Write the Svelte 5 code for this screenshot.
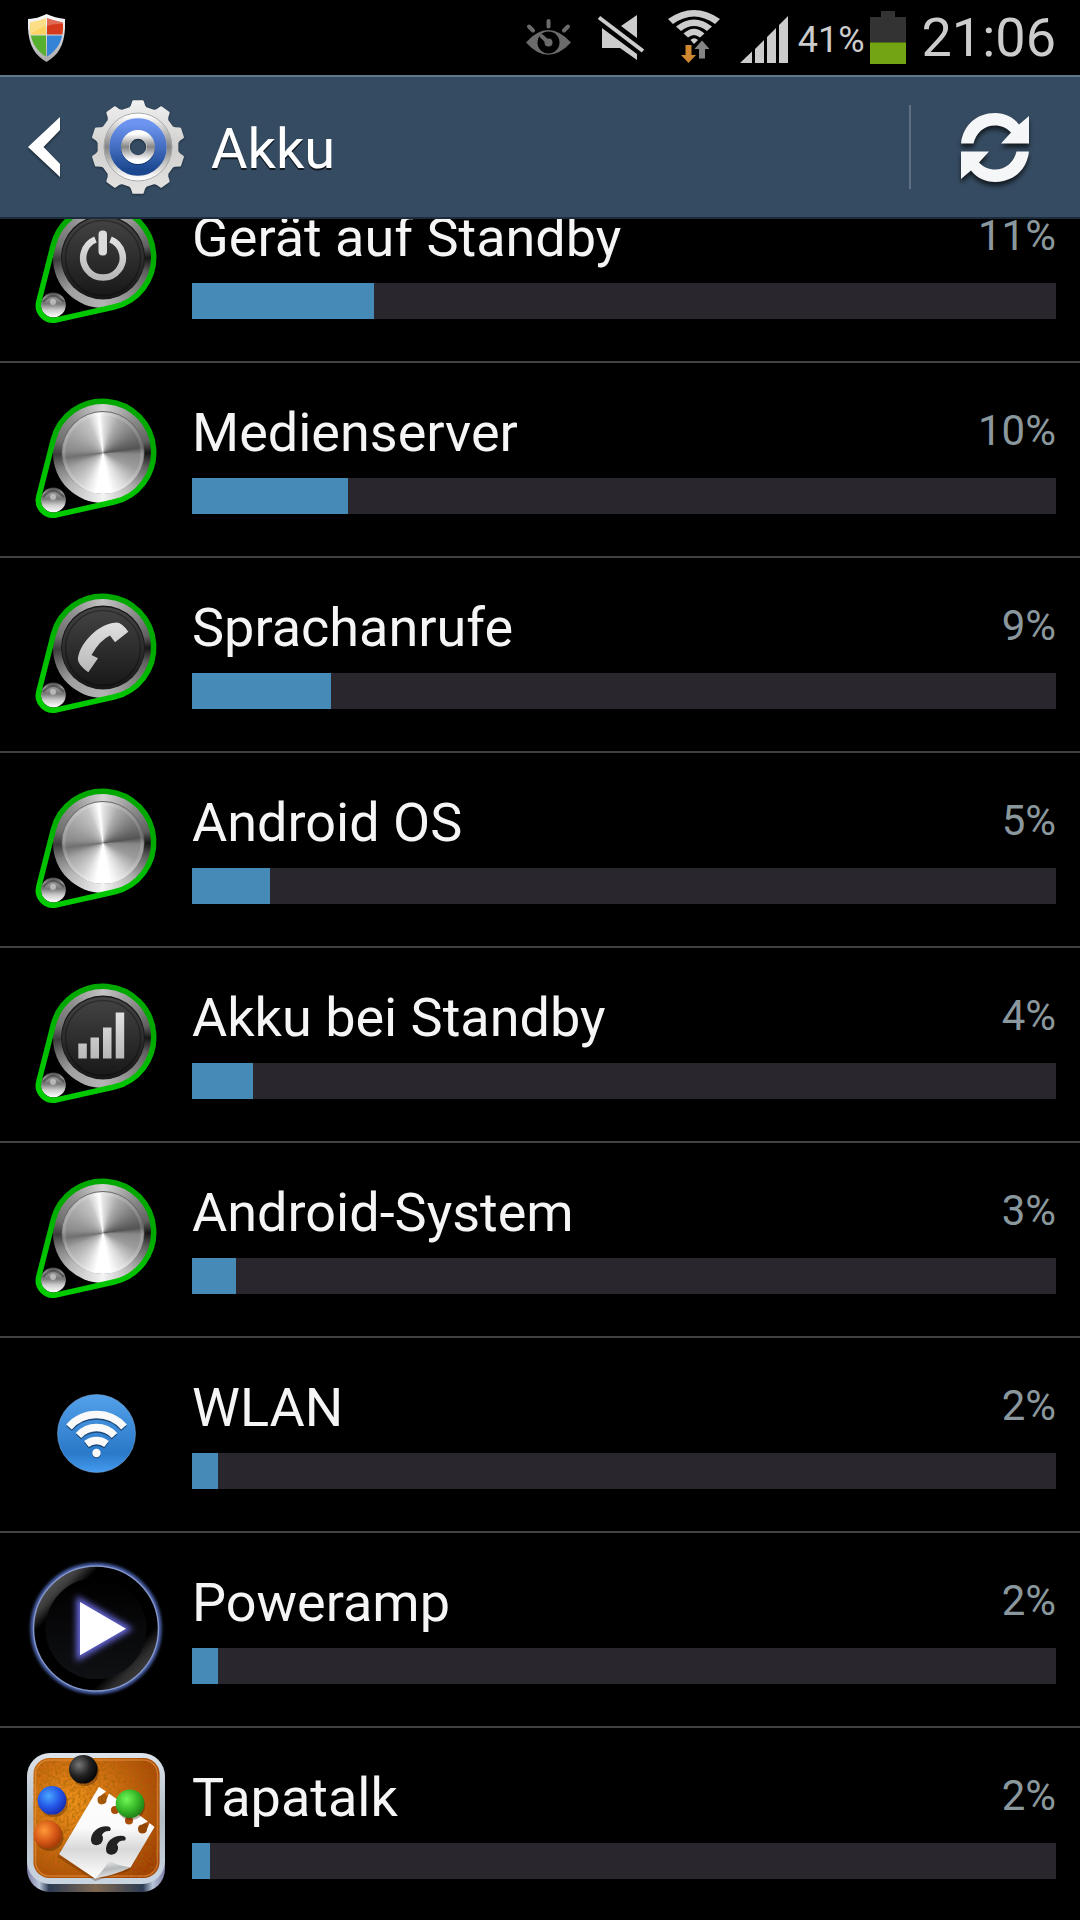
<script>
  const apps = [
    { name: 'Gerät auf Standby', percent: 11, bar: 21.1, icon: 'power' },
    { name: 'Medienserver', percent: 10, bar: 18.1, icon: 'metal' },
    { name: 'Sprachanrufe', percent: 9, bar: 16.1, icon: 'phone' },
    { name: 'Android OS', percent: 5, bar: 9, icon: 'metal' },
    { name: 'Akku bei Standby', percent: 4, bar: 7.1, icon: 'signal' },
    { name: 'Android-System', percent: 3, bar: 5.1, icon: 'metal' },
    { name: 'WLAN', percent: 2, bar: 3, icon: 'wifi' },
    { name: 'Poweramp', percent: 2, bar: 3, icon: 'poweramp' },
    { name: 'Tapatalk', percent: 2, bar: 2.1, icon: 'tapatalk' },
  ];

  // Outline of the ten-toothed settings gear, centred on 47,47.
  const gearPoints = Array.from({ length: 10 }, (_, i) => {
    const a = (i * Math.PI) / 5;
    const tooth = [[-8, -38.5], [-6, -41], [-4.5, -45.5], [4.5, -45.5], [6, -41], [8, -38.5]];
    return tooth
      .map(([x, y]) => {
        const px = 47 + x * Math.cos(a) - y * Math.sin(a);
        const py = 47 + x * Math.sin(a) + y * Math.cos(a);
        return `${px.toFixed(1)},${py.toFixed(1)}`;
      })
      .join(' ');
  }).join(' ');
</script>

{#snippet knob(kind)}
  <svg class="icon" viewBox="0 0 144 144" aria-hidden="true">
    <foreignObject x="29" y="16" width="100" height="100"><div class="rim" class:dark={kind !== 'metal'}></div></foreignObject>
    {#if kind === 'metal'}
      <circle cx="79" cy="65.5" r="41.5" fill="#666" />
      <foreignObject x="38" y="25" width="82" height="82"><div class="brushed"></div></foreignObject>
      <circle cx="79" cy="66" r="39" fill="none" stroke="#fff" stroke-opacity=".15" stroke-width="3" />
    {:else}
      <circle cx="79" cy="65.5" r="42" fill="#1a1a1a" />
      <circle cx="79" cy="66" r="41" fill="url(#face)" />
      <circle cx="79" cy="66" r="37.5" fill="none" stroke="#000" stroke-opacity=".3" stroke-width="1.5" />
    {/if}
    <circle cx="29.3" cy="113" r="12.5" fill="url(#ball)" />
    <path d="M19 110q10-12 21 0" fill="none" stroke="#222" stroke-opacity=".45" stroke-width="2.5" />
    <circle cx="29" cy="110" r="3" fill="#ddd" opacity=".6" />
    <path d="M29.3 52.7A51 51 0 1 1 89.9 115L32.6 127.9A15 15 0 0 1 14.8 109.6Z" fill="none" stroke="url(#belt)" stroke-width="5.5" />
    {#if kind === 'power'}
      <path d="M71.5 47.5a19.8 19.8 0 1 0 15 0" fill="none" stroke="url(#glyph)" stroke-width="6.5" />
      <rect x="74.5" y="38.5" width="8.5" height="25" rx="4" fill="#dcdcdc" />
    {:else if kind === 'phone'}
      <path d="M91 40.7Q97 39.5 104.300 49.7L91 60.3 86 53.5Q76 58 67.5 73L74 76.3 64.3 90.3Q54 83 53.8 77C56 59 77 41 91 40.7Z" fill="url(#glyph)" />
    {:else if kind === 'signal'}
      <path d="M54.3 71.5h8.5v15h-8.5zM66.5 65.5h8.5v21h-8.5zM79 55.5h8.5v31H79zM91.7 40.5h8.5v46h-8.5z" fill="url(#glyph)" />
    {/if}
  </svg>
{/snippet}

<svg class="defs" aria-hidden="true">
  <defs>
    <linearGradient id="belt" x1="0.6" y1="0" x2="0.3" y2="1">
      <stop offset="0" stop-color="#00a800" /><stop offset=".3" stop-color="#00a800" />
      <stop offset=".6" stop-color="#00be00" /><stop offset="1" stop-color="#00cc00" />
    </linearGradient>
    <linearGradient id="face" x1="0" y1="0" x2="0" y2="1">
      <stop offset="0" stop-color="#444" /><stop offset="1" stop-color="#171717" />
    </linearGradient>
    <linearGradient id="ball" x1="0" y1="0" x2="0" y2="1">
      <stop offset="0" stop-color="#444" /><stop offset=".2" stop-color="#999" /><stop offset=".45" stop-color="#777" />
      <stop offset=".7" stop-color="#ccc" /><stop offset="1" stop-color="#fff" />
    </linearGradient>
    <linearGradient id="glyph" x1="0" y1="0" x2="0" y2="1">
      <stop offset="0" stop-color="#e0e0e0" /><stop offset="1" stop-color="#b8b8b8" />
    </linearGradient>
    <linearGradient id="sky" x1="0" y1="0" x2="0" y2="1">
      <stop offset="0" stop-color="#54a0ea" /><stop offset=".75" stop-color="#2a79c8" /><stop offset="1" stop-color="#459cf0" />
    </linearGradient>
    <linearGradient id="ampRim" x1="0" y1="0" x2="1" y2="1">
      <stop offset=".14" stop-color="#505050" /><stop offset=".2" stop-color="#3c3c3c" /><stop offset=".27" stop-color="#000" />
      <stop offset=".73" stop-color="#000" /><stop offset=".8" stop-color="#2c2c2c" /><stop offset=".86" stop-color="#3c3c3c" />
    </linearGradient>
    <linearGradient id="ampFace" x1="0" y1="0" x2="0" y2="1">
      <stop offset="0" stop-color="#000" /><stop offset="1" stop-color="#101114" />
    </linearGradient>
    <linearGradient id="frame" x1="0" y1="0" x2="0" y2="1">
      <stop offset="0" stop-color="#dde3ea" /><stop offset=".5" stop-color="#b4bdc5" /><stop offset="1" stop-color="#c9d6e2" />
    </linearGradient>
    <linearGradient id="frameEdge" x1="0" y1="0" x2="1" y2="0">
      <stop offset="0" stop-color="#8080a8" /><stop offset=".09" stop-color="#b8c4d8" /><stop offset=".16" stop-color="#2c3c54" />
      <stop offset=".5" stop-color="#806850" /><stop offset=".84" stop-color="#2c3c54" /><stop offset=".91" stop-color="#b8c4d8" /><stop offset="1" stop-color="#8080a8" />
    </linearGradient>
    <radialGradient id="cork" cx=".32" cy=".38" r=".8">
      <stop offset="0" stop-color="#f0941c" /><stop offset=".45" stop-color="#cf6e12" /><stop offset="1" stop-color="#a03c04" />
    </radialGradient>
    <linearGradient id="paper" x1=".4" y1="0" x2=".4" y2="1">
      <stop offset="0" stop-color="#fff" /><stop offset=".45" stop-color="#fafafa" /><stop offset=".68" stop-color="#d8d8d8" /><stop offset="1" stop-color="#fff" />
    </linearGradient>
    <linearGradient id="curl" x1=".2" y1="0" x2=".5" y2="1">
      <stop offset="0" stop-color="#f4f4f4" /><stop offset=".5" stop-color="#b4b8ba" /><stop offset="1" stop-color="#eee" />
    </linearGradient>
    <radialGradient id="pinBlack" cx=".35" cy=".35" r=".65"><stop offset="0" stop-color="#777" /><stop offset=".6" stop-color="#222" /><stop offset="1" stop-color="#080808" /></radialGradient>
    <radialGradient id="pinBlue" cx=".38" cy=".35" r=".65"><stop offset="0" stop-color="#4aa8ff" /><stop offset=".6" stop-color="#2458e8" /><stop offset="1" stop-color="#1a30b8" /></radialGradient>
    <radialGradient id="pinRed" cx=".38" cy=".35" r=".65"><stop offset="0" stop-color="#ff9a38" /><stop offset=".6" stop-color="#d85a18" /><stop offset="1" stop-color="#a83c08" /></radialGradient>
    <radialGradient id="pinGreen" cx=".38" cy=".35" r=".65"><stop offset="0" stop-color="#70f858" /><stop offset=".6" stop-color="#38b828" /><stop offset="1" stop-color="#208418" /></radialGradient>
    <linearGradient id="gearBody" x1="0" y1="0" x2="0" y2="1">
      <stop offset="0" stop-color="#f0f0f0" /><stop offset=".5" stop-color="#d0cfce" /><stop offset="1" stop-color="#e6e4e2" />
    </linearGradient>
    <linearGradient id="gearRing" x1="0" y1="0" x2="0" y2="1">
      <stop offset="0" stop-color="#fff" /><stop offset=".5" stop-color="#858585" /><stop offset="1" stop-color="#fff" />
    </linearGradient>
    <linearGradient id="gearBlue" x1="0" y1="0" x2="0" y2="1">
      <stop offset="0" stop-color="#6c94f0" /><stop offset="1" stop-color="#1c4890" />
    </linearGradient>
    <linearGradient id="shieldRim" x1="0" y1="0" x2="0" y2="1">
      <stop offset="0" stop-color="#fff" /><stop offset="1" stop-color="#a8a8a8" />
    </linearGradient>
    <clipPath id="shieldClip"><path d="M18.5 4Q26 6.500 35 8.5C36 26 30 36 18.5 43 7 36 1 26 2 8.5 11 6.5 11 6.5 18.5 4Z" /></clipPath>
    <filter id="grain" x="0" y="0" width="100%" height="100%">
      <feTurbulence type="fractalNoise" baseFrequency=".35" numOctaves="2" seed="4" />
      <feColorMatrix values="0 0 0 0 .35  0 0 0 0 .12  0 0 0 0 0  1.6 0 0 0 -.6" />
      <feComposite in2="SourceGraphic" operator="in" />
    </filter>
    <filter id="glow" x="-30%" y="-30%" width="160%" height="160%"><feGaussianBlur stdDeviation="3" /></filter>
    <filter id="rimGlow" x="-20%" y="-20%" width="140%" height="140%"><feGaussianBlur stdDeviation="1.5" /></filter>
  </defs>
</svg>

<div class="screen">
  <div class="status">
    <svg class="shield" viewBox="0 0 37 48" role="img" aria-label="Sicherheit">
      <path d="M18.5 0Q27 4 37 5C38 28 32 40 18.5 48 5 40-1 28 0 5 10 4 11 3.5 18.5 0Z" fill="url(#shieldRim)" />
      <g clip-path="url(#shieldClip)">
        <path d="M0 0h18v20.500H0z" fill="#fbd35e" /><path d="M19 0h18v20.500H19z" fill="#d63a1c" />
        <path d="M0 21.500h18V48H0z" fill="#58b030" /><path d="M19 21.500h18V48H19z" fill="#3583d6" />
        <path d="M0 0h37v10Q18 8 0 22z" fill="#fff" opacity=".25" />
      </g>
    </svg>
    <div class="indicators">
      <svg class="indicator" viewBox="0 0 48 75" role="img" aria-label="Smart Stay">
        <path d="M2 42.5Q24 17.5 47 42.5 24 67 2 42.5Z" fill="#6b6b6b" />
        <circle cx="24.5" cy="42.5" r="11" fill="#000" /><circle cx="24.5" cy="42.5" r="4" fill="#6b6b6b" />
        <path d="M24.5 42.5 17.5 36M24.5 21v5.5M5 26.5l4 4M44 26.5l-4 4" stroke="#6b6b6b" stroke-width="4" stroke-linecap="round" fill="none" />
      </svg>
      <svg class="indicator" viewBox="0 0 48 75" role="img" aria-label="Ton aus">
        <path d="M41 15v23L25 26zM6 28l35 26v6L24 48H6z" fill="#ccc" />
        <path d="M3 17.5 47 51" stroke="#ccc" stroke-width="4" />
      </svg>
      <svg class="indicator" viewBox="0 0 48 75" role="img" aria-label="WLAN verbunden">
        <path d="M0 19Q26 1 52 19L47 24Q26 9 5 24ZM8 26.5Q26 12.5 44 26.5L39 31Q26 21 13 31ZM15.5 33.5Q26 24 36.5 33.5L32 37.5Q26 32.5 20 37.5ZM22.5 40Q26 36.5 30 40L26 44Z" fill="#ccc" />
        <path d="M17.5 45h6v10h4.5l-7.5 8-7.5-8h4.5z" fill="#cf8730" />
        <path d="M31 58.5h6V49h4.5L34 40.5 26.5 49H31z" fill="#858585" />
      </svg>
      <svg class="indicator" viewBox="0 0 48 75" role="img" aria-label="Mobilfunksignal">
        <path d="M0 63 12 51.5V63zM15 49l9-9v23h-9zM27 37l9-9v35h-9zM39 25l9-9v47h-9z" fill="#ccc" />
      </svg>
    </div>
    <span class="level">41%</span>
    <svg class="battery" viewBox="0 0 36 75" role="img" aria-label="Akku">
      <path d="M11 11h14v6h11v26H0V17h11z" fill="#333" /><path d="M0 42h36v22H0z" fill="#72a414" /><path d="M0 42h36v1H0z" fill="#4c6a18" />
    </svg>
    <time>21:06</time>
  </div>

  <header>
    <button class="up" aria-label="Zurück">
      <svg class="chevron" viewBox="0 0 32 60"><path d="M32 0v13L15.5 30 32 47v13L0 30z" fill="#fff" /></svg>
      <svg class="gear" viewBox="0 0 94 94">
        <path fill-rule="evenodd" d="M{gearPoints}ZM47 37.5a9.5 9.5 0 1 0 0 19 9.5 9.5 0 0 0 0-19z" fill="url(#gearBody)" stroke="url(#gearBody)" stroke-width="2.5" stroke-linejoin="round" />
        <circle cx="47" cy="47" r="31.5" fill="none" stroke="url(#gearRing)" stroke-width="5.5" />
        <circle cx="47" cy="47" r="34" fill="none" stroke="#aaa" stroke-width="1" />
        <circle cx="47" cy="47" r="22.5" fill="none" stroke="url(#gearBlue)" stroke-width="12.5" />
        <circle cx="47" cy="48" r="16" fill="none" stroke="#123468" stroke-width="2" />
        <circle cx="47" cy="47" r="13" fill="none" stroke="url(#gearRing)" stroke-width="8" />
      </svg>
    </button>
    <h1>Akku</h1>
    <span class="divider"></span>
    <button class="refresh" aria-label="Aktualisieren">
      <svg viewBox="0 0 70 70">
        <g fill="#f5f6f8">
          <path id="arrow" d="M0 30.5C2 12 16 0 34 0 44 0 52 4 58 11.5L68 3v27.500H40L50 19.5C46 15 40 12.5 34 12.5 23 12.5 15 20 12.5 30.5Z" />
          <use href="#arrow" transform="rotate(180 34 34.5)" />
        </g>
      </svg>
    </button>
  </header>

  <main>
    <ul>
      {#each apps as app}
        <li>
          {#if app.icon === 'wifi'}
            <svg class="icon" viewBox="0 0 144 144" aria-hidden="true">
              <circle cx="72.5" cy="71.5" r="39" fill="url(#sky)" stroke="#7fb0e0" stroke-opacity=".5" />
              <g fill="none" stroke-width="7.5">
                <path d="M45 66.5A36.5 36.5 0 0 1 100 66.5M54.5 75A24.5 24.5 0 0 1 90.5 75M62.5 83.5A16 16 0 0 1 82.5 83.5" stroke="#1c4a7c" />
                <path d="M45 65A36.5 36.5 0 0 1 100 65M54.5 73.5A24.5 24.5 0 0 1 90.5 73.5M62.5 82A16 16 0 0 1 82.5 82" stroke="#fafafa" />
              </g>
              <circle cx="72.5" cy="92" r="4.2" fill="#1c4a7c" /><circle cx="72.5" cy="91" r="4.2" fill="#fafafa" />
            </svg>
          {:else if app.icon === 'poweramp'}
            <svg class="icon" viewBox="0 0 144 144" aria-hidden="true">
              <circle cx="72" cy="71.5" r="63.5" fill="none" stroke="#5068b8" stroke-width="4" filter="url(#rimGlow)" />
              <circle cx="72" cy="71.5" r="62.5" fill="url(#ampRim)" stroke="#8496c8" stroke-width="1.5" />
              <circle cx="72" cy="71.5" r="50.5" fill="url(#ampFace)" />
              <path d="M56 45 102 71.7 56 98.3Z" fill="#6a6ae0" stroke="#6a6ae0" stroke-width="7" filter="url(#glow)" />
              <path d="M56 45 102 71.7 56 98.3Z" fill="#fff" />
            </svg>
          {:else if app.icon === 'tapatalk'}
            <svg class="icon" viewBox="0 0 144 144" aria-hidden="true">
              <rect x="3" y="20" width="138" height="120" rx="23" fill="url(#frameEdge)" />
              <rect x="3" y="1" width="138" height="131" rx="23" fill="url(#frame)" />
              <rect x="9.5" y="6" width="126" height="120" rx="16" fill="url(#cork)" />
              <rect x="9.5" y="6" width="126" height="120" rx="16" filter="url(#grain)" />
              <rect x="11.5" y="8" width="122" height="116" rx="14" fill="none" stroke="#f0a050" stroke-opacity=".5" stroke-width="1.5" />
              <path d="M74 37 129 77 105 119 71 129 33 105Z" fill="#5c2800" opacity=".35" />
              <path d="M75 34.7 82 39.5 77 43.5A4.5 4.5 0 1 0 82.5 47.5L85 41.5 124 69.5 118 72.5A4.5 4.5 0 1 0 123 77L125.5 71 130.5 75 106.7 115.3 71 126.5 35 102.3Z" fill="url(#paper)" />
              <circle cx="91" cy="58" r="4" fill="#a84c08" /><circle cx="105" cy="68.5" r="4" fill="#a84c08" />
              <path d="M71 126.5Q80 118 85 108 94 114 106.700 115.3 92 123 71 126.5Z" fill="url(#curl)" />
              <path id="quote" d="M84.5 74.5Q88 75.5 86 79 80 78.5 78 83 80.5 87 77 91.5 72 95 68 91.5 65.5 87 69 81 75 73 84.5 74.5Z" fill="#222" />
              <use href="#quote" x="15" y="9.5" />
              <g fill="#3c1800" opacity=".35"><circle cx="61" cy="20" r="14" /><circle cx="30" cy="51" r="14" /><circle cx="25.5" cy="85" r="14" /><circle cx="107" cy="54" r="14" /></g>
              <circle cx="59.3" cy="17.3" r="14.3" fill="url(#pinBlack)" />
              <circle cx="28" cy="48.3" r="14.3" fill="url(#pinBlue)" />
              <circle cx="23.7" cy="82.7" r="14" fill="url(#pinRed)" />
              <circle cx="106" cy="51.7" r="14.3" fill="url(#pinGreen)" />
            </svg>
          {:else}
            {@render knob(app.icon)}
          {/if}
          <div class="usage">
            <div class="labels">
              <span class="name">{app.name}</span>
              <span class="percent">{app.percent}%</span>
            </div>
            <div class="track"><div class="fill" style="width: {app.bar}%"></div></div>
          </div>
        </li>
      {/each}
    </ul>
  </main>
</div>

<style>
  :global(body) {
    margin: 0;
    background: #000;
  }

  .defs {
    position: absolute;
    width: 0;
    height: 0;
  }

  .screen {
    display: flex;
    flex-direction: column;
    height: 100vh;
    overflow: hidden;
    background: #000;
    color: #f5f5f5;
    font-family: Roboto, sans-serif;
  }

  .status {
    display: flex;
    flex: none;
    align-items: center;
    height: 75px;
    padding: 0 24px 0 28px;
    color: #ccc;
  }

  .shield {
    width: 37px;
    height: 48px;
  }

  .indicators {
    display: flex;
    gap: 24px;
    margin-left: auto;
  }

  .indicator {
    width: 48px;
    height: 75px;
    overflow: visible;
  }

  .level {
    margin: 0 5px 0 10px;
    padding-top: 4px;
    font-size: 36px;
    line-height: 48px;
  }

  .battery {
    width: 36px;
    height: 75px;
  }

  time {
    margin-left: 16px;
    font-size: 54px;
    line-height: 64px;
  }

  header {
    display: flex;
    flex: none;
    align-items: center;
    box-sizing: border-box;
    height: 144px;
    border-top: 2px solid #60788c;
    border-bottom: 2px solid #1c2c3c;
    background: #354b61;
  }

  button {
    display: flex;
    align-items: center;
    border: 0;
    padding: 0;
    background: none;
  }

  .up {
    gap: 31px;
    padding: 0 26px 0 28px;
  }

  .chevron {
    width: 32px;
    height: 60px;
    filter: drop-shadow(0 2px 1px #1c2c3c);
  }

  .gear {
    width: 94px;
    height: 94px;
    filter: drop-shadow(0 1px 1px #1c2c3c);
  }

  h1 {
    flex: 1;
    margin: 0;
    padding-top: 4px;
    color: #fff;
    font-size: 56px;
    font-weight: 400;
    line-height: 66px;
    text-shadow: 0 2px 0 #101820;
  }

  .divider {
    width: 2px;
    height: 84px;
    background: #5d6f81;
  }

  .refresh {
    justify-content: center;
    width: 169px;
    height: 100%;
    padding-top: 2px;
  }

  .refresh svg {
    width: 70px;
    height: 70px;
    overflow: visible;
    filter: drop-shadow(0 4px 2px #141c24);
  }

  main {
    flex: 1;
    min-height: 0;
    overflow: hidden;
  }

  /* The list is scrolled a little way past its first row. */
  ul {
    margin: -51px 0 0;
    padding: 0;
    list-style: none;
  }

  li {
    display: flex;
    gap: 24px;
    padding: 0 24px;
    border-bottom: 2px solid #424242;
  }

  .icon {
    flex: none;
    width: 144px;
    height: 144px;
    margin-top: 24px;
  }

  .usage {
    flex: 1;
    padding: 38px 0 42px;
  }

  .labels {
    display: flex;
    justify-content: space-between;
    margin-bottom: 13px;
  }

  .name {
    font-size: 54px;
    line-height: 64px;
  }

  .percent {
    color: #8a989e;
    font-size: 42px;
    line-height: 60px;
  }

  .track {
    height: 36px;
    background: #29262d;
  }

  .fill {
    height: 100%;
    background: #468ab7;
  }

  .rim,
  .brushed {
    width: 100%;
    height: 100%;
    border-radius: 50%;
  }

  .rim {
    background: conic-gradient(#d4d4d4 0deg, #909090 40deg, #606060 75deg, #161616 90deg, #606060 108deg, #b0b0b0 140deg, #f4f4f4 180deg, #b8b8b8 225deg, #808080 250deg, #3c3c3c 268deg, #707070 285deg, #909090 320deg, #d4d4d4 360deg);
  }

  .rim.dark {
    background: conic-gradient(#c4c4c4 0deg, #909090 40deg, #606060 75deg, #161616 90deg, #606060 108deg, #888 140deg, #b4b4b4 180deg, #a0a0a0 225deg, #707070 250deg, #3c3c3c 268deg, #707070 285deg, #909090 320deg, #c4c4c4 360deg);
  }

  .brushed {
    background: conic-gradient(#e4e4e4 0deg, #a8a8a8 25deg, #7c7c7c 55deg, #545454 82deg, #888 92deg, #9c9c9c 115deg, #d8d8d8 145deg, #fff 170deg, #fff 190deg, #d0d0d0 215deg, #a4a4a4 245deg, #707070 263deg, #8c8c8c 275deg, #acacac 310deg, #c4c4c4 335deg, #fff 354deg, #e4e4e4 360deg);
  }
</style>
